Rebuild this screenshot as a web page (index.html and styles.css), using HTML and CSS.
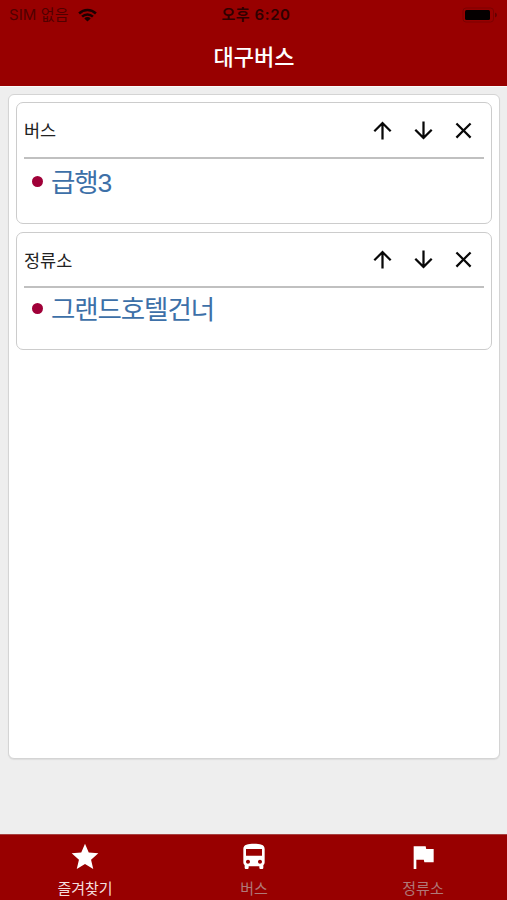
FILE: index.html
```html
<!DOCTYPE html>
<html lang="ko">
<head>
<meta charset="utf-8">
<meta name="viewport" content="width=device-width, initial-scale=1">
<title>대구버스</title>
<link rel="stylesheet" href="styles.css">
</head>
<body>
<div class="app">
  <header class="header">
    <div class="status">
      <div class="carrier"><span class="carrier-name">SIM 없음</span>
        <svg class="wifi" viewBox="0 0 19 14"><g fill="none" stroke="currentColor" stroke-width="2.5"><path d="M1.1 5.5a12 12 0 0 1 16.8 0"/><path d="M4.1 8.7a7.7 7.7 0 0 1 10.8 0"/></g><path fill="currentColor" d="M6.3 10.4a4.6 4.6 0 0 1 6.4 0L9.5 13.6z"/></svg>
      </div>
      <span class="time">오후 6:20</span>
      <svg class="battery" viewBox="0 0 36 16"><rect x="1" y="1" width="30.5" height="14" rx="3" fill="none" stroke="#7c0000"/><rect x="3" y="3" width="25" height="10" rx="1.5" fill="#050000"/><path fill="#650000" d="M33 5.5q2 .8 2 2.5t-2 2.5z"/></svg>
    </div>
    <h1 class="title">대구버스</h1>
  </header>
  <main class="content">
    <div class="panel">
      <section class="card card-bus">
        <div class="card-head">
          <h2 class="card-title">버스</h2>
          <div class="actions">
            <svg viewBox="0 0 24 24"><path d="M4 12l1.41 1.41L11 7.83V20h2V7.83l5.58 5.59L20 12l-8-8-8 8z"/></svg>
            <svg viewBox="0 0 24 24"><path d="M20 12l-1.41-1.41L13 16.17V4h-2v12.17l-5.58-5.59L4 12l8 8 8-8z"/></svg>
            <svg viewBox="0 0 24 24"><path d="M19 6.41L17.59 5 12 10.59 6.41 5 5 6.41 10.59 12 5 17.59 6.41 19 12 13.41 17.59 19 19 17.59 13.41 12z"/></svg>
          </div>
        </div>
        <div class="entry"><i class="dot"></i><span class="name">급행3</span></div>
      </section>
      <section class="card card-stop">
        <div class="card-head">
          <h2 class="card-title">정류소</h2>
          <div class="actions">
            <svg viewBox="0 0 24 24"><path d="M4 12l1.41 1.41L11 7.83V20h2V7.83l5.58 5.59L20 12l-8-8-8 8z"/></svg>
            <svg viewBox="0 0 24 24"><path d="M20 12l-1.41-1.41L13 16.17V4h-2v12.17l-5.58-5.59L4 12l8 8 8-8z"/></svg>
            <svg viewBox="0 0 24 24"><path d="M19 6.41L17.59 5 12 10.59 6.41 5 5 6.41 10.59 12 5 17.59 6.41 19 12 13.41 17.59 19 19 17.59 13.41 12z"/></svg>
          </div>
        </div>
        <div class="entry"><i class="dot"></i><span class="name">그랜드호텔건너</span></div>
      </section>
    </div>
  </main>
  <nav class="tabs">
    <div class="tab active">
      <svg viewBox="0 0 24 24"><path d="M12 17.27L18.18 21l-1.64-7.03L22 9.24l-7.19-.61L12 2 9.19 8.63 2 9.24l5.46 4.73L5.82 21z"/></svg>
      <span>즐겨찾기</span>
    </div>
    <div class="tab">
      <svg viewBox="0 0 24 24"><path d="M4 16c0 .88.39 1.67 1 2.22V20c0 .55.45 1 1 1h1c.55 0 1-.45 1-1v-1h8v1c0 .55.45 1 1 1h1c.55 0 1-.45 1-1v-1.78c.61-.55 1-1.34 1-2.22V6c0-3.5-3.58-4-8-4s-8 .5-8 4v10zm3.5 1c-.83 0-1.5-.67-1.5-1.5S6.67 14 7.5 14s1.5.67 1.5 1.5S8.33 17 7.5 17zm9 0c-.83 0-1.5-.67-1.5-1.5s.67-1.5 1.5-1.5 1.5.67 1.5 1.5-.67 1.5-1.5 1.5zm1.5-6H6V6h12v5z"/></svg>
      <span>버스</span>
    </div>
    <div class="tab">
      <svg viewBox="0 0 24 24"><path d="M14.4 6L14 4H5v17h2v-7h5.6l.4 2h7V6z"/></svg>
      <span>정류소</span>
    </div>
  </nav>
</div>
</body>
</html>
```
FILE: styles.css
```css
* { box-sizing: border-box; }
body {
  margin: 0;
  font-family: "Noto Sans CJK KR", sans-serif;
  background: #eee;
}
.app { display: flex; flex-direction: column; height: 900px; }
svg { display: block; }

.header { height: 86px; background: #980000; }
.status {
  display: grid;
  grid-template-columns: 1fr auto 1fr;
  align-items: center;
  height: 30px;
  padding: 0 9px;
  font-family: Inter, "Noto Sans CJK KR", sans-serif;
  font-size: 15px;
  line-height: 20px;
}
.carrier { display: flex; align-items: center; gap: 9px; color: #1c0000; }
.carrier-name { color: #500000; letter-spacing: .1px; }
.wifi { width: 19px; height: 14px; }
.time { color: #300000; font-weight: 600; letter-spacing: .6px; padding-left: 5px; }
.battery { width: 36px; height: 16px; justify-self: end; }
.title {
  margin: 0;
  padding-left: 1px;
  text-align: center;
  color: #fff;
  font-size: 22px;
  font-weight: 500;
  line-height: 50px;
}

.content { flex: 1; padding: 7px 7px 0 8px; border-top: 1px solid #fafafa; }
.panel {
  height: 665px;
  padding: 7px;
  background: #fff;
  border: 1px solid #d4d4d4;
  border-radius: 6px;
  box-shadow: 0 1px 1px #ddd;
}
.card {
  padding: 0 7px;
  border: 1px solid #ccc;
  border-radius: 7px;
  background: #fff;
}
.card-bus { height: 122px; }
.card-stop { height: 118px; margin-top: 8px; }
.card-head {
  display: flex;
  justify-content: space-between;
  height: 56px;
  border-bottom: 2px solid #c0c0c0;
}
.card-stop .card-head { height: 55px; }
.card-title {
  margin: 0;
  font-size: 17.5px;
  font-weight: 400;
  line-height: 53px;
  color: #222;
}
.actions { display: flex; align-items: center; gap: 13.5px; padding-right: 7px; }
.actions svg { width: 27px; height: 27px; fill: #080808; }
.entry { display: flex; align-items: center; padding-left: 8px; height: 45px; }
.card-stop .entry { height: 41px; }
.dot { width: 11px; height: 11px; margin-right: 8px; border-radius: 50%; background: #a00038; }
.name {
  padding-top: 2px;
  color: #3d70a8;
  font-family: "Liberation Sans", "Noto Sans CJK KR", sans-serif;
  font-size: 26.5px;
  letter-spacing: -1.1px;
  line-height: 38px;
}

.tabs {
  display: grid;
  grid-template-columns: repeat(3, 1fr);
  height: 66px;
  background: #980000;
  border-top: 1px solid #a64040;
}
.tab { display: flex; flex-direction: column; align-items: center; color: #b07878; font-size: 15px; line-height: 20px; padding-top: 6px; }
.tab svg { width: 32px; height: 32px; fill: #fff; }
.tab span { margin-top: 5px; padding-left: 1px; }
.tab.active { color: #f3dede; }
```
